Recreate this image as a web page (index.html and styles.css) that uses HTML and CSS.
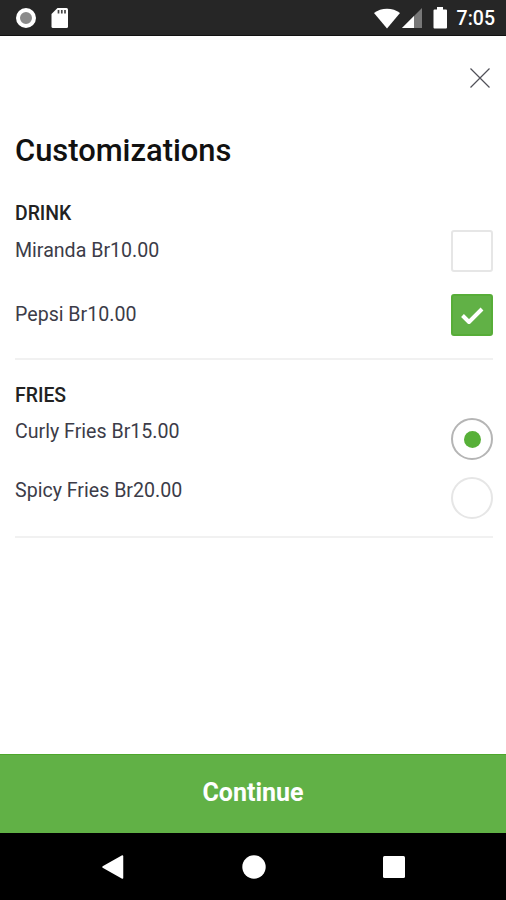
FILE: index.html
```html
<!DOCTYPE html>
<html lang="en">
<head>
    <meta charset="UTF-8">
    <meta name="viewport" content="width=device-width, initial-scale=1.0">
    <title>Customizations</title>
    <link rel="stylesheet" href="styles.css">
</head>
<body>
    <div class="screen">
        <!-- Status bar -->
        <div class="status-bar">
            <svg class="status-record" width="22" height="22" viewBox="0 0 22 22">
                <circle cx="11" cy="11" r="8" fill="#8a8a8a" stroke="#fff" stroke-width="4"/>
            </svg>
            <svg class="status-card" width="18" height="22" viewBox="0 0 18 22">
                <path d="M6.500 1H15.500Q17 1 17 2.500V19.500Q17 21 15.500 21H2Q.5 21 .5 19.500V7z" fill="#fff"/>
                <path d="M7.500 3v3.500M10.800 3v3.500M14 3v3.500" stroke="#444" stroke-width="1.700"/>
            </svg>
            <svg class="status-wifi" width="28" height="22" viewBox="0 0 28 22">
                <path d="M1 6C8 .2 20 .2 27 6L14 21.500z" fill="#fff"/>
            </svg>
            <svg class="status-signal" width="20" height="20" viewBox="0 0 20 20">
                <path d="M20 0V20H0z" fill="#787878"/>
                <path d="M12 8V20H0z" fill="#fff"/>
            </svg>
            <svg class="status-battery" width="15" height="22" viewBox="0 0 15 22">
                <path d="M4 0h6v2.500h3Q14 2.500 14 3.500V20.500Q14 21.500 13 21.500H1.500Q.5 21.500 .5 20.500V3.500Q.5 2.500 1.500 2.500H4z" fill="#fff"/>
            </svg>
            <span class="status-time">7:05</span>
        </div>

        <div class="content">
            <div class="close-row">
                <svg class="close" width="20" height="20" viewBox="0 0 20 20">
                    <path d="M.5 .5l19 19M19.500 .5l-19 19" stroke="#505058" stroke-width="1.200"/>
                </svg>
            </div>
            <h1>Customizations</h1>

            <!-- Drinks -->
            <div class="group drinks">
                <h2>DRINK</h2>
                <div class="option">
                    <span class="label">Miranda Br10.00</span>
                    <span class="checkbox"></span>
                </div>
                <div class="option">
                    <span class="label">Pepsi Br10.00</span>
                    <span class="checkbox checked">
                        <svg width="24" height="20" viewBox="0 0 24 20">
                            <path d="M2.500 10.500L9 17L22 4" fill="none" stroke="#fff" stroke-width="4" stroke-linejoin="round"/>
                        </svg>
                    </span>
                </div>
            </div>

            <!-- Fries -->
            <div class="group fries">
                <h2>FRIES</h2>
                <div class="option">
                    <span class="label">Curly Fries Br15.00</span>
                    <span class="radio selected"></span>
                </div>
                <div class="option">
                    <span class="label">Spicy Fries Br20.00</span>
                    <span class="radio"></span>
                </div>
            </div>
        </div>

        <button class="continue">Continue</button>

        <!-- Navigation bar -->
        <div class="nav-bar">
            <svg width="24" height="26" viewBox="0 0 24 26">
                <path d="M21.500 2V24L2 13z" fill="#fff" stroke="#fff" stroke-width="1.500" stroke-linejoin="round"/>
            </svg>
            <svg width="24" height="24" viewBox="0 0 24 24">
                <circle cx="12" cy="12" r="11.700" fill="#fff"/>
            </svg>
            <svg width="22" height="22" viewBox="0 0 22 22">
                <rect width="22" height="22" rx="1.500" fill="#fff"/>
            </svg>
        </div>
    </div>
</body>
</html>
```
FILE: styles.css
```css
* {
    box-sizing: border-box;
}
body {
    margin: 0;
    font-family: Roboto, "Liberation Sans", sans-serif;
    background: #fff;
}
svg {
    display: block;
    flex: none;
}
.screen {
    display: flex;
    flex-direction: column;
    width: 506px;
    height: 900px;
}
.status-bar {
    display: flex;
    align-items: center;
    height: 36px;
    padding: 0 11px 0 15px;
    background: #262626;
    border-bottom: 1px solid #111;
}
.status-card {
    margin-left: 14px;
}
.status-wifi {
    margin-left: auto;
}
.status-signal {
    margin-left: 1px;
}
.status-battery {
    margin-left: 11px;
}
.status-time {
    margin-left: 9px;
    padding-top: 2px;
    color: #fff;
    font-size: 19.5px;
    font-weight: 500;
}
.content {
    flex: 1;
    padding: 0 13px 0 15px;
}
.close-row {
    display: flex;
    justify-content: flex-end;
    align-items: center;
    height: 84px;
    padding-right: 3px;
}
h1 {
    margin: 0;
    color: #111;
    font-size: 30.9px;
    font-weight: 500;
    line-height: 62px;
}
.group {
    display: flex;
    flex-direction: column;
    border-bottom: 2px solid #f1f1f1;
}
h2 {
    margin: 0;
    color: #222;
    font-size: 19.4px;
    font-weight: 500;
    line-height: 34px;
}
.option {
    display: flex;
    justify-content: space-between;
    height: 42px;
}
.label {
    color: #3c3c48;
    font-size: 19.6px;
    line-height: 42px;
}
.checkbox {
    display: flex;
    align-items: center;
    justify-content: center;
    width: 42px;
    height: 42px;
    border: 2px solid #e6e6e6;
    border-radius: 3px;
}
.checked {
    background: #61b146;
    border-color: #57ad38;
}
.radio {
    display: flex;
    align-items: center;
    justify-content: center;
    width: 42px;
    height: 42px;
    border: 2px solid #e6e6e6;
    border-radius: 50%;
}
.selected {
    border-color: #b5b5b5;
}
.selected::after {
    content: "";
    width: 17px;
    height: 17px;
    border-radius: 50%;
    background: #57b038;
}
.drinks {
    gap: 22px;
    padding: 15px 0 22px;
}
.drinks h2 {
    margin-bottom: -23px;
}
.fries {
    gap: 17px;
    padding: 19px 0 17px;
}
.fries h2 {
    margin-bottom: -12px;
}
.fries .label {
    line-height: 28px;
}
.continue {
    height: 79px;
    padding: 0 0 4px;
    border: none;
    border-top: 1px solid #4ea72c;
    background: #61b146;
    color: #fff;
    font-family: inherit;
    font-size: 25px;
    font-weight: 700;
}
.nav-bar {
    display: flex;
    align-items: center;
    justify-content: space-between;
    height: 67px;
    padding: 0 101px;
    background: #000;
}
```
